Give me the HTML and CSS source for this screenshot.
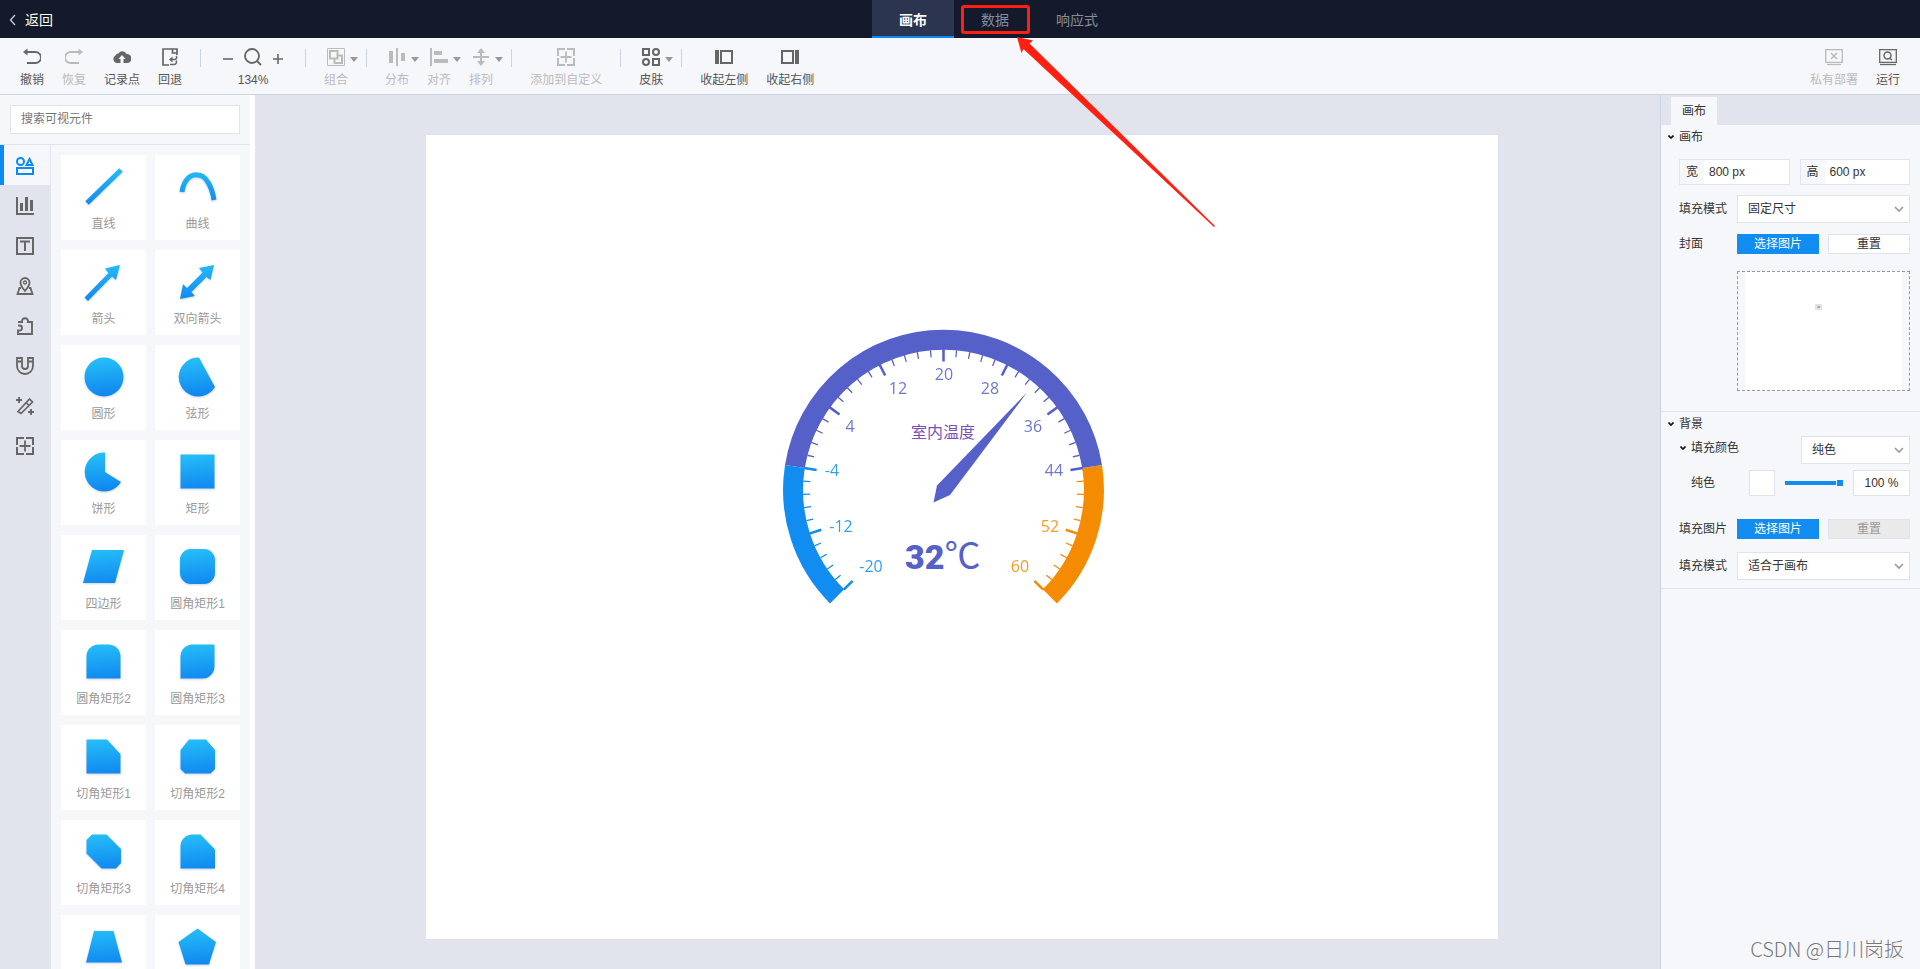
FILE: index.html
```html
<!DOCTYPE html>
<html lang="zh-CN">
<head>
<meta charset="utf-8">
<title>画布编辑器</title>
<link rel="stylesheet" href="styles.css">
</head>
<body>
<svg class="defs" width="0" height="0" aria-hidden="true">
  <defs>
    <linearGradient id="shapeFill" gradientUnits="userSpaceOnUse" x1="40" y1="13" x2="43" y2="50">
      <stop offset="0" stop-color="#25bff8"/><stop offset="1" stop-color="#1087f0"/>
    </linearGradient>
  </defs>
</svg>

<header class="topbar">
  <button class="back"><svg width="8" height="14" viewBox="0 0 8 14"><path d="M6 2 1.500 7 6 12" fill="none" stroke="#c9cdd6" stroke-width="1.300"/></svg>返回</button>
  <nav class="modes">
    <button class="mode active">画布</button>
    <button class="mode marked">数据
      <span class="mark-box"></span>
      <svg class="mark-arrow" width="200" height="192" viewBox="0 0 200 192"><path d="M0 0 16 3.500 12.500 6.500 198 189 197 190 6.500 12 4.500 16Z" fill="#ff2012"/></svg>
    </button>
    <button class="mode">响应式</button>
  </nav>
</header>

<div class="toolbar">
  <button class="tool"><svg width="18" height="18" viewBox="0 0 18 18"><path d="M2 4H12.500A5 5 0 0 1 12.500 15H4" fill="none" stroke="#666" stroke-width="1.800"/><path d="M0 4 4.500.500V7.500Z" fill="#666"/></svg><span>撤销</span></button>
  <button class="tool" disabled><svg width="18" height="18" viewBox="0 0 18 18"><path d="M16 4H5.500A5 5 0 0 0 5.500 15H14" fill="none" stroke="#bbb" stroke-width="1.800"/><path d="M18 4 13.500.500V7.500Z" fill="#bbb"/></svg><span>恢复</span></button>
  <button class="tool"><svg width="18" height="18" viewBox="0 0 18 18"><path d="M4 15A4 4 0 0 1 2.500 7.500 3 3 0 0 1 5.500 5.500 4.500 4.500 0 0 1 13.500 6 4.500 4.500 0 0 1 14.500 15H10.500V11H12.500L9 7 5.500 11H7.500V15Z" fill="#666"/></svg><span>记录点</span></button>
  <button class="tool"><svg width="18" height="18" viewBox="0 0 18 18"><path d="M8 17H2V1H16V7M11.500 1V5H16" fill="none" stroke="#666" stroke-width="1.700"/><path d="M8 11.500 11.500 8.500V14.500Z" fill="#666"/><path d="M11 11.500H13.500A2 2 0 0 0 15 8M9 16.500H13A2.500 2.500 0 0 0 15 12.500" fill="none" stroke="#666" stroke-width="1.500"/></svg><span>回退</span></button>
  <i class="sep"></i>
  <div class="zoomer">
    <div class="zoom-row">
      <button class="zoom-btn" aria-label="缩小"><svg width="10" height="18" viewBox="0 0 10 18"><path d="M0 11H10" stroke="#666" stroke-width="1.600"/></svg></button>
      <svg width="18" height="18" viewBox="0 0 18 18"><circle cx="8" cy="8" r="7" fill="none" stroke="#666" stroke-width="1.800"/><path d="M13 13 17 17" stroke="#666" stroke-width="1.800"/></svg>
      <button class="zoom-btn" aria-label="放大"><svg width="10" height="18" viewBox="0 0 10 18"><path d="M0 11H10M5 6V16" stroke="#666" stroke-width="1.600"/></svg></button>
    </div>
    <span>134%</span>
  </div>
  <i class="sep"></i>
  <button class="tool" disabled><svg width="18" height="18" viewBox="0 0 18 18" fill="none" stroke="#bbb"><path d="M.500.500H17.500V17.500H.500Z"/><path d="M3 3H10.500V10.500H3ZM10.500 7.500H15V15H7.500V10.500" stroke-width="2"/></svg><span>组合</span><b class="caret"></b></button>
  <i class="sep"></i>
  <button class="tool" disabled><svg width="18" height="18" viewBox="0 0 18 18" fill="#bbb"><path d="M1 3H5V15H1ZM8 0H10V18H8ZM13 5H17V13H13Z"/></svg><span>分布</span><b class="caret"></b></button>
  <button class="tool" disabled><svg width="18" height="18" viewBox="0 0 18 18" fill="#bbb"><path d="M0 0H2V18H0ZM4 3H12V7H4ZM4 11H18V15H4Z"/></svg><span>对齐</span><b class="caret"></b></button>
  <button class="tool" disabled><svg width="18" height="18" viewBox="0 0 18 18" fill="#bbb"><path d="M1 8H17V10H1ZM8 3H10V15H8ZM9 0 13 5H5ZM9 18 5 13H13Z"/></svg><span>排列</span><b class="caret"></b></button>
  <i class="sep"></i>
  <button class="tool" disabled><svg width="18" height="18" viewBox="0 0 18 18"><path d="M8 1H1V8M10 1H17V8M17 10V17H10M8 17H1V10" fill="none" stroke="#bbb" stroke-width="2"/><path d="M3.500 9H14.500M9 3.500V14.500" stroke="#bbb" stroke-width="1.800"/></svg><span>添加到自定义</span></button>
  <i class="sep"></i>
  <button class="tool"><svg width="18" height="18" viewBox="0 0 18 18" fill="none" stroke="#666" stroke-width="2"><path d="M1 1H7V7H1ZM11 11H17V17H11Z"/><circle cx="14" cy="4" r="3"/><circle cx="4" cy="14" r="3"/></svg><span>皮肤</span><b class="caret"></b></button>
  <i class="sep"></i>
  <button class="tool"><svg width="18" height="18" viewBox="0 0 18 18"><path d="M0 2H4V16H0Z" fill="#666"/><path d="M6 3H17V15H6Z" fill="none" stroke="#666" stroke-width="2"/></svg><span>收起左侧</span></button>
  <button class="tool"><svg width="18" height="18" viewBox="0 0 18 18"><path d="M14 2H18V16H14Z" fill="#666"/><path d="M1 3H12V15H1Z" fill="none" stroke="#666" stroke-width="2"/></svg><span>收起右侧</span></button>
  <button class="tool push" disabled><svg width="18" height="18" viewBox="0 0 18 18" fill="none" stroke="#bbb"><path d="M.700 1.700H17.300V14.300H.700Z" stroke-width="1.300"/><path d="M2 16.500H16" stroke-width="1.300"/><path d="M6 5 12 11M12 5 6 11" stroke-width="1.500"/></svg><span>私有部署</span></button>
  <button class="tool"><svg width="18" height="18" viewBox="0 0 18 18" fill="none" stroke="#666"><path d="M.700 1.700H17.300V14.300H.700Z" stroke-width="1.300"/><path d="M1 16.500H17" stroke-width="1.300"/><circle cx="8.500" cy="7.500" r="3.500" stroke-width="1.500"/><path d="M10.500 10 13 12" stroke-width="1.500"/></svg><span>运行</span></button>
</div>

<div class="workspace">
  <aside class="library">
    <div class="search"><input type="text" placeholder="搜索可视元件" aria-label="搜索可视元件"></div>
    <div class="library-body">
      <nav class="rail">
        <button class="rail-btn active" aria-label="形状"><svg width="18" height="18" viewBox="0 0 18 18" fill="none" stroke="#0a8af5" stroke-width="2"><circle cx="4.500" cy="4.500" r="3.500"/><path d="M13.500 2 16.500 8H10.500ZM1 11H17V17H1Z"/></svg></button>
        <button class="rail-btn" aria-label="图表"><svg width="18" height="18" viewBox="0 0 18 18" fill="#666"><path d="M0 0H2V16H18V18H0ZM4 6H7V14H4ZM9 0H12V14H9ZM14 3H17V14H14Z"/></svg></button>
        <button class="rail-btn" aria-label="文本"><svg width="18" height="18" viewBox="0 0 18 18" fill="none" stroke="#666"><path d="M1 1H17V17H1Z" stroke-width="2"/><path d="M4 4.500H14M9 4.500V14" stroke-width="2"/></svg></button>
        <button class="rail-btn" aria-label="地图"><svg width="18" height="18" viewBox="0 0 18 18" fill="none" stroke="#666" stroke-width="1.800"><path d="M9 14C6 10.500 4.500 8.500 4.500 5.500A4.500 4.500 0 0 1 13.500 5.500C13.500 8.500 12 10.500 9 14Z"/><circle cx="9" cy="5.500" r="1.500" stroke-width="1.300"/><path d="M5 11H3.500L1.500 17H16.500L14.500 11H13"/></svg></button>
        <button class="rail-btn" aria-label="组件"><svg width="18" height="18" viewBox="0 0 18 18" fill="none" stroke="#666" stroke-width="1.900"><path d="M2 5H6C5.500 0 12.500 0 12 5H16V17H2V13.500H3.500A2.500 2.500 0 0 0 3.500 8.500H2"/></svg></button>
        <button class="rail-btn" aria-label="吸附"><svg width="18" height="18" viewBox="0 0 18 18" fill="none" stroke="#666" stroke-width="1.800"><path d="M1 1H6V9A3 3 0 0 0 12 9V1H17V9A8 8 0 0 1 1 9ZM1 4.500H6M12 4.500H17"/></svg></button>
        <button class="rail-btn" aria-label="魔棒"><svg width="18" height="18" viewBox="0 0 18 18" fill="none" stroke="#666"><path d="M2 14.500 13.500 2 16.500 5 5 16.500ZM10 5.500 13 8.500" stroke-width="1.700"/><path d="M0 3H6M3 0V6M12 15H18M15 12V18" stroke-width="1.900"/></svg></button>
        <button class="rail-btn" aria-label="自定义"><svg width="18" height="18" viewBox="0 0 18 18" fill="none" stroke="#666"><path d="M8 1H1V8M10 1H17V8M17 10V17H10M8 17H1V10" stroke-width="2"/><path d="M3.500 9H14.500M9 3.500V14.500" stroke-width="1.800"/></svg></button>
      </nav>
      <div class="cards">
        <button class="card"><svg viewBox="0 0 85 58"><path class="stroke" d="M26 48 60 15"/></svg>直线</button>
        <button class="card"><svg viewBox="0 0 85 58"><path class="stroke" d="M27 37C29 23 37 19 43 20 51 20 57 32 59 45"/></svg>曲线</button>
        <button class="card"><svg viewBox="0 0 85 58"><path d="M59 15 55 30 51 26.500 27 51 23.500 47.500 47.500 23 44 18.500Z"/></svg>箭头</button>
        <button class="card"><svg viewBox="0 0 85 58"><path d="M59 15 55.500 30 51.500 27 36.500 42 40 46 25 49 28 34 32 38 47.500 22.500 44 18Z"/></svg>双向箭头</button>
        <button class="card"><svg viewBox="0 0 85 58"><circle cx="43" cy="32" r="19.500"/></svg>圆形</button>
        <button class="card"><svg viewBox="0 0 85 58"><path d="M44 12.500A19.500 19.500 0 1 0 60 42Z"/></svg>弦形</button>
        <button class="card"><svg viewBox="0 0 85 58"><path d="M44 32V12.500A19.500 19.500 0 1 0 60 42Z"/></svg>饼形</button>
        <button class="card"><svg viewBox="0 0 85 58"><path d="M25.500 14.500H59.500V48.500H25.500Z"/></svg>矩形</button>
        <button class="card"><svg viewBox="0 0 85 58"><path d="M31 15H63L54 48H22Z"/></svg>四边形</button>
        <button class="card"><svg viewBox="0 0 85 58"><rect x="25" y="14" width="35" height="35" rx="11"/></svg>圆角矩形1</button>
        <button class="card"><svg viewBox="0 0 85 58"><path d="M25.500 48.500V26.500A12 12 0 0 1 37.500 14.500H47.500A12 12 0 0 1 59.500 26.500V48.500Z"/></svg>圆角矩形2</button>
        <button class="card"><svg viewBox="0 0 85 58"><path d="M25.500 48.500V26.500A12 12 0 0 1 37.500 14.500H59.500V36.500A12 12 0 0 1 47.500 48.500Z"/></svg>圆角矩形3</button>
        <button class="card"><svg viewBox="0 0 85 58"><path d="M25.500 14.500H46L59.500 29V48.500H25.500Z"/></svg>切角矩形1</button>
        <button class="card"><svg viewBox="0 0 85 58"><path d="M34 14.500H51L60 25V44L55.500 48.500H30L25.500 44V25Z"/></svg>切角矩形2</button>
        <button class="card"><svg viewBox="0 0 85 58"><path d="M31 14.500H45.500L60 29V43L55 48.500H40.500L25.500 33.500V20Z"/></svg>切角矩形3</button>
        <button class="card"><svg viewBox="0 0 85 58"><path d="M25.500 48.500V26.500A12 12 0 0 1 37.500 14.500H45.500L60 29.500V48.500Z"/></svg>切角矩形4</button>
        <button class="card" aria-label="梯形"><svg viewBox="0 0 85 58"><path d="M33 16H52.500L61 47.500H25Z"/></svg></button>
        <button class="card" aria-label="五边形"><svg viewBox="0 0 85 58"><path d="M42.500 13.500 61 27 54 49.500H30.500L23.500 27Z"/></svg></button>
      </div>
    </div>
  </aside>

  <main class="stage">
    <svg class="canvas" viewBox="0 0 1072 804">
      <defs><path id="major" d="M0-128.500V-141"/></defs>
      <g transform="translate(517.500 355)" fill="none">
        <path d="M148.600-23.500A150.500 150.500 0 0 1 106.400 106.400" stroke="#f58b00" stroke-width="20"/>
        <path d="M-148.600-23.500A150.500 150.500 0 0 1 148.600-23.500" stroke="#5560c8" stroke-width="20"/>
        <path d="M-106.400 106.400A150.500 150.500 0 0 1-148.600-23.500" stroke="#118cf0" stroke-width="20"/>
        <g stroke-width="7" stroke-dasharray=".1 .9" stroke-dashoffset=".05">
          <path d="M135.300-21.400A137 137 0 0 1 96.900 96.900" pathLength="10" stroke="#f58b00"/>
          <path d="M-135.300-21.400A137 137 0 0 1 135.300-21.400" pathLength="30" stroke="#5560c8"/>
          <path d="M-96.900 96.900A137 137 0 0 1-135.300-21.400" pathLength="10" stroke="#118cf0"/>
        </g>
        <g stroke-width="2.500">
          <g stroke="#118cf0"><use href="#major" transform="rotate(-135)"/><use href="#major" transform="rotate(-108)"/><use href="#major" transform="rotate(-81)"/></g>
          <g stroke="#5560c8"><use href="#major" transform="rotate(-54)"/><use href="#major" transform="rotate(-27)"/><use href="#major"/><use href="#major" transform="rotate(27)"/><use href="#major" transform="rotate(54)"/><use href="#major" transform="rotate(81)"/></g>
          <g stroke="#f58b00"><use href="#major" transform="rotate(108)"/><use href="#major" transform="rotate(135)"/></g>
        </g>
        <path d="M83.500-97.500 6.500 5-10 12.500-6.500-4.500Z" fill="#5560c8"/>
      </g>
      <g class="scale">
        <g fill="#118cf0"><text x="445" y="437">-20</text><text x="415" y="397">-12</text><text x="406" y="341">-4</text></g>
        <g fill="#5560c8"><text x="424" y="297">4</text><text x="472" y="259">12</text><text x="518" y="245">20</text><text x="564" y="259">28</text><text x="607" y="297">36</text><text x="628" y="341">44</text></g>
        <g fill="#f58b00"><text x="624" y="397">52</text><text x="594" y="437">60</text></g>
      </g>
      <text class="gauge-title" x="517" y="303">室内温度</text>
      <text class="gauge-value" x="479" y="434">32<tspan class="unit">℃</tspan></text>
    </svg>
  </main>

  <aside class="props">
    <div class="tabs"><button class="tab">画布</button></div>
    <section class="group first">
      <h2 class="heading"><svg width="6" height="4" viewBox="0 0 6 4"><path d="M.500.500 3 3 5.500.500" fill="none" stroke="#111" stroke-width="1.600"/></svg>画布</h2>
      <div class="row sizes">
        <label class="size"><span>宽</span><input type="text" value="800 px"></label>
        <label class="size"><span>高</span><input type="text" value="600 px"></label>
      </div>
      <div class="row">
        <label class="name" for="fit">填充模式</label>
        <div class="picker"><select id="fit"><option>固定尺寸</option></select><svg width="10" height="7" viewBox="0 0 10 7"><path d="M1 1 5 5 9 1" fill="none" stroke="#999" stroke-width="1.600"/></svg></div>
      </div>
      <div class="row buttons">
        <span class="name">封面</span>
        <button class="btn primary">选择图片</button><button class="btn">重置</button>
      </div>
      <div class="cover"><div class="thumb"><svg width="157" height="118" viewBox="0 0 157 118"><rect x="70" y="32" width="7" height="6" fill="#e2e2e2"/><path d="M72.500 34H75V36H72.500Z" fill="#aaa"/></svg></div></div>
    </section>
    <section class="group">
      <h2 class="heading"><svg width="6" height="4" viewBox="0 0 6 4"><path d="M.500.500 3 3 5.500.500" fill="none" stroke="#111" stroke-width="1.600"/></svg>背景</h2>
      <div class="row sub color-row">
        <label class="subheading" for="kind"><svg width="6" height="4" viewBox="0 0 6 4"><path d="M.500.500 3 3 5.500.500" fill="none" stroke="#111" stroke-width="1.600"/></svg>填充颜色</label>
        <div class="picker short"><select id="kind"><option>纯色</option></select><svg width="10" height="7" viewBox="0 0 10 7"><path d="M1 1 5 5 9 1" fill="none" stroke="#999" stroke-width="1.600"/></svg></div>
      </div>
      <div class="row sub solid-row">
        <span class="name">纯色</span>
        <button class="swatch" aria-label="颜色"></button>
        <input class="slider" type="range" value="100" aria-label="不透明度">
        <input class="percent" type="text" value="100 %" aria-label="不透明度数值">
      </div>
      <div class="row buttons">
        <span class="name">填充图片</span>
        <button class="btn primary">选择图片</button><button class="btn" disabled>重置</button>
      </div>
      <div class="row last">
        <label class="name" for="bgfit">填充模式</label>
        <div class="picker"><select id="bgfit"><option>适合于画布</option></select><svg width="10" height="7" viewBox="0 0 10 7"><path d="M1 1 5 5 9 1" fill="none" stroke="#999" stroke-width="1.600"/></svg></div>
      </div>
    </section>
    <div class="watermark">CSDN @日川岗扳</div>
  </aside>
</div>
</body>
</html>
```

FILE: styles.css
```css
* { box-sizing: border-box; }
html, body { height: 100%; }
body {
  margin: 0;
  display: flex;
  flex-direction: column;
  overflow: hidden;
  background: #f6f7fb;
  color: #333;
  font: 12px/16px "Liberation Sans", "Noto Sans CJK SC", sans-serif;
}
button, input, select { font: inherit; color: inherit; border: 0; padding: 0; margin: 0; background: none; border-radius: 0; outline: 0; }
svg { display: block; }
.defs { position: absolute; }

/* Top bar */
.topbar { display: flex; height: 38px; flex: none; background: #141a2b; font-size: 14px; }
.back { display: flex; align-items: center; gap: 8px; width: 70px; padding: 2px 0 0 9px; color: #fff; white-space: nowrap; }
.modes { flex: 1; display: flex; justify-content: center; }
.mode { position: relative; width: 82px; padding-top: 2px; color: #868c9c; }
.mode.active { background: #2b3550; color: #fff; font-weight: bold; border-bottom: 2px solid #0a8af5; padding-top: 3px; }
.mark-box { position: absolute; left: 7px; top: 5px; width: 69px; height: 29px; border: 3px solid #ff2012; border-radius: 3px; }
.mark-arrow { position: absolute; left: 63px; top: 37px; z-index: 5; pointer-events: none; }

/* Toolbar */
.toolbar { display: flex; flex: none; gap: 18px; height: 57px; padding: 10px 20px 0; border-bottom: 1px solid #c9d3e1; color: #555; }
.tool { position: relative; display: flex; flex-direction: column; align-items: center; gap: 6px; height: 40px; white-space: nowrap; }
.tool:disabled { color: #bbb; }
.push { margin-left: auto; }
.sep { width: 1px; height: 18px; margin-top: 1px; background: #c9d3e1; }
.caret { position: absolute; left: 100%; top: 9px; margin-left: 2px; border: 4px solid transparent; border-top: 5px solid #999; border-bottom: 0; }
.zoomer { display: flex; flex-direction: column; align-items: center; gap: 6px; width: 68px; }
.zoom-row { display: flex; gap: 11px; }

/* Workspace */
.workspace { flex: 1; min-height: 0; display: flex; }
.library { width: 255px; flex: none; display: flex; flex-direction: column; border-right: 5px solid #fff; }
.search { padding: 10px; border-bottom: 1px solid #e1e4ec; }
.search input { display: block; width: 100%; height: 29px; padding: 0 10px 2px; border: 1px solid #e1e4ec; background: #fff; }
.search input::placeholder { color: #757575; }
.library-body { flex: 1; min-height: 0; display: flex; }
.rail { width: 51px; flex: none; background: #e1e4ec; }
.rail-btn { display: flex; align-items: center; justify-content: center; width: 50px; height: 40px; padding-top: 2px; }
.rail-btn.active { background: #f6f7fb; border-left: 4px solid #0a8af5; padding-right: 4px; }
.cards { flex: 1; display: grid; grid-template-columns: 1fr 1fr; grid-auto-rows: 85px; gap: 10px 9px; padding: 10px; overflow: hidden; }
.card { display: flex; flex-direction: column; justify-content: flex-start; background: #fff; color: #999; align-items: center; gap: 3px; }
.card svg { flex: none; width: 100%; height: 58px; fill: url(#shapeFill); filter: drop-shadow(0 1px 1px rgba(0, 40, 90, .2)); }
.card .stroke { fill: none; stroke: url(#shapeFill); stroke-width: 5; }

/* Stage */
.stage { flex: 1; min-width: 0; padding: 40px 162px 30px 171px; background: #e1e4ec; overflow: hidden; }
.canvas { width: 100%; height: auto; background: #fff; }
.scale { font: 16px "Open Sans", sans-serif; text-anchor: middle; opacity: .85; }
.gauge-title { font-size: 16px; fill: #7d4fb5; text-anchor: middle; }
.gauge-value { font: 900 34px Impact, Roboto, sans-serif; fill: #5560c8; }
.unit { font: 36px "Noto Sans CJK SC", sans-serif; }

/* Properties */
.props { position: relative; width: 260px; flex: none; border-left: 1px solid #c9d3e1; }
.tabs { height: 30px; padding: 2px 10px 0; background: #e1e4ec; }
.tab { width: 46px; height: 28px; background: #f6f7fb; }
.group { padding: 0 10px 0 18px; border-bottom: 1px solid #e1e4ec; }
.first { padding-bottom: 20px; }
.heading { display: flex; align-items: center; gap: 5px; margin: 0 0 0 -11px; height: 24px; font: inherit; }
.row { display: flex; align-items: center; margin-bottom: 10px; }
.name { width: 58px; flex: none; }
.sizes { gap: 10px; margin-top: 10px; }
.size { flex: 1; min-width: 0; display: flex; height: 26px; border: 1px solid #e1e4ec; background: #fff; }
.size span { width: 24px; flex: none; background: #f6f7fb; text-align: center; line-height: 25px; }
.size input { flex: 1; min-width: 0; padding-left: 5px; }
.picker { position: relative; flex: 1; height: 28px; }
.picker select { width: 100%; height: 28px; padding: 0 24px 0 10px; appearance: none; border: 1px solid #e1e4ec; background: #fff; }
.picker svg { position: absolute; right: 6px; top: 11px; pointer-events: none; }
.picker.short { flex: none; width: 109px; margin-left: auto; }
.buttons { margin-top: 11px; }
.btn { flex: 1; height: 20px; border: 1px solid #e1e4ec; background: #fff; line-height: 16px; }
.btn + .btn { margin-left: 9px; }
.btn.primary { background: #118cf0; border-color: #118cf0; color: #fff; }
.btn:disabled { background: #eaeaea; color: #999; }
.cover { height: 120px; margin: 17px 0 0 58px; border: 1px dashed #999; display: flex; justify-content: center; }
.thumb { width: 157px; background: #fff; }
.sub { padding-left: 12px; }
.color-row { margin-bottom: 6px; }
.subheading { display: flex; align-items: center; gap: 5px; margin-left: -11px; padding-bottom: 4px; }
.solid-row { margin-bottom: 23px; }
.solid-row .name { width: 58px; }
.swatch { width: 26px; height: 26px; border: 1px solid #e1e4ec; background: #fff; }
.slider { appearance: none; flex: 1; min-width: 0; height: 6px; margin: 0 10px; background: linear-gradient(#118cf0, #118cf0) 0 50% / calc(100% - 7px) 4px no-repeat; }
.slider::-webkit-slider-thumb { appearance: none; width: 6px; height: 6px; background: #118cf0; }
.percent { width: 57px; height: 26px; border: 1px solid #e1e4ec; background: #fff; text-align: center; }
.buttons + .last { margin-top: 13px; margin-bottom: 8px; }
.watermark { position: absolute; right: 16px; bottom: 7px; font: 300 20px/26px "Noto Sans CJK SC", sans-serif; color: #777; white-space: nowrap; }
```
